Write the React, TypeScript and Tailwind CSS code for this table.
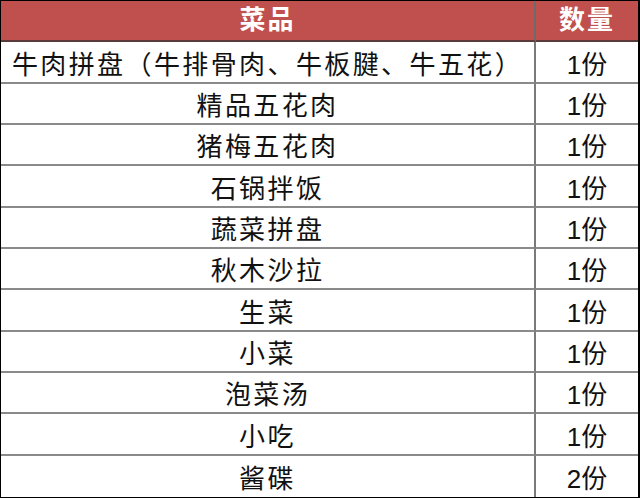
import React from 'react';

const rows = [
  { name: '牛肉拼盘（牛排骨肉、牛板腱、牛五花）', qty: '1份' },
  { name: '精品五花肉', qty: '1份' },
  { name: '猪梅五花肉', qty: '1份' },
  { name: '石锅拌饭', qty: '1份' },
  { name: '蔬菜拼盘', qty: '1份' },
  { name: '秋木沙拉', qty: '1份' },
  { name: '生菜', qty: '1份' },
  { name: '小菜', qty: '1份' },
  { name: '泡菜汤', qty: '1份' },
  { name: '小吃', qty: '1份' },
  { name: '酱碟', qty: '2份' },
];

export default function App() {
  return (
    <div className="w-[640px] h-[498px] bg-white font-['Liberation_Sans','Noto_Sans_CJK_SC',sans-serif]">
      <div className="grid h-full grid-cols-[535px_1fr] grid-rows-12 border border-black border-r-2 text-[26px] text-[#111]">
        <div className="flex items-center justify-center bg-[#c0504d] border-r-2 border-b-2 border-r-[#6b6b6b] border-b-[#5a3a3a] font-bold text-white tracking-[2px]">
          菜品
        </div>
        <div className="flex items-center justify-center bg-[#c0504d] border-b-2 border-b-[#5a3a3a] font-bold text-white tracking-[2px]">
          数量
        </div>
        {rows.map((r, i) => (
          <React.Fragment key={r.name}>
            <div
              className={`flex items-center justify-center pt-1.5 border-r-2 border-r-[#7a7a7a] tracking-[2.4px] whitespace-nowrap ${
                i < rows.length - 1 ? 'border-b-2 border-b-[#8a8a8a]' : ''
              }`}
            >
              {r.name}
            </div>
            <div
              className={`flex items-center justify-center pt-1.5 ${
                i < rows.length - 1 ? 'border-b-2 border-b-[#8a8a8a]' : ''
              }`}
            >
              {r.qty}
            </div>
          </React.Fragment>
        ))}
      </div>
    </div>
  );
}
